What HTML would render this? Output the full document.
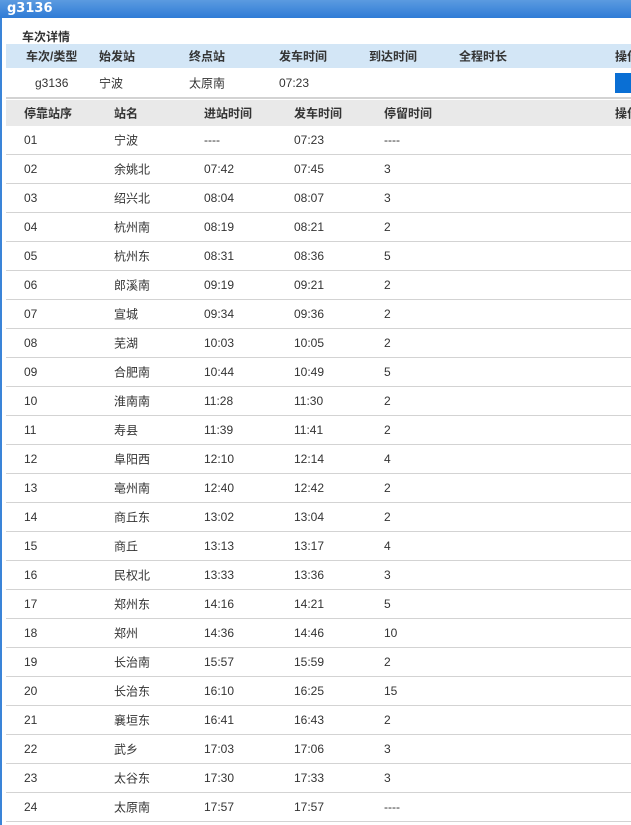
<!DOCTYPE html><html><head><meta charset="utf-8"><style>
body{margin:0;width:631px;height:825px;overflow:hidden;background:#fff;font-family:"Liberation Sans","Noto Sans CJK SC",sans-serif;font-size:12px;color:#333;position:relative}
.t{position:absolute;left:0;top:0;width:631px;height:18px;background:linear-gradient(#5b9be0,#2f7bd6);color:#fff;font-weight:bold;font-size:13px;line-height:17px;padding-left:7px;box-sizing:border-box;font-family:"DejaVu Sans",sans-serif}
.lb{position:absolute;left:0;top:18px;width:2px;height:807px;background:#3a84d8}
.a{position:absolute;white-space:nowrap}
.row{position:absolute;left:6px;width:625px;overflow:hidden}
.h1{background:#d3e6f6;font-weight:bold;height:24px;top:44px}
.h2{background:#e9e9e9;font-weight:bold;height:26px;top:100px}
.row span{position:absolute;top:50%;transform:translateY(-50%);white-space:nowrap}
.ln{border-bottom:1px solid #d3d3d3}
</style></head><body>
<div class="t">g3136</div><div class="lb"></div>
<div class="a" style="left:22px;top:28px;font-weight:bold">车次详情</div>
<div class="row h1"><span style="left:20px">车次/类型</span><span style="left:93px">始发站</span><span style="left:183px">终点站</span><span style="left:273px">发车时间</span><span style="left:363px">到达时间</span><span style="left:453px">全程时长</span><span style="left:609px">操作</span></div>
<div class="row ln" style="top:68px;height:29px;border-bottom-width:2px"><span style="left:29px">g3136</span><span style="left:93px">宁波</span><span style="left:183px">太原南</span><span style="left:273px">07:23</span><span style="left:609px;width:20px;height:20px;background:#0a6fd4"></span></div>
<div class="row h2"><span style="left:18px">停靠站序</span><span style="left:108px">站名</span><span style="left:198px">进站时间</span><span style="left:288px">发车时间</span><span style="left:378px">停留时间</span><span style="left:609px">操作</span></div>
<div id="r"></div>
<script>
var d=[["宁波","----","07:23","----"],["余姚北","07:42","07:45","3"],["绍兴北","08:04","08:07","3"],["杭州南","08:19","08:21","2"],["杭州东","08:31","08:36","5"],["郎溪南","09:19","09:21","2"],["宣城","09:34","09:36","2"],["芜湖","10:03","10:05","2"],["合肥南","10:44","10:49","5"],["淮南南","11:28","11:30","2"],["寿县","11:39","11:41","2"],["阜阳西","12:10","12:14","4"],["亳州南","12:40","12:42","2"],["商丘东","13:02","13:04","2"],["商丘","13:13","13:17","4"],["民权北","13:33","13:36","3"],["郑州东","14:16","14:21","5"],["郑州","14:36","14:46","10"],["长治南","15:57","15:59","2"],["长治东","16:10","16:25","15"],["襄垣东","16:41","16:43","2"],["武乡","17:03","17:06","3"],["太谷东","17:30","17:33","3"],["太原南","17:57","17:57","----"]];
var h="";d.forEach(function(x,i){var n=(i<9?"0":"")+(i+1);h+='<div class="row ln" style="top:'+(126+i*29)+'px;height:28px"><span style="left:18px">'+n+'</span><span style="left:108px">'+x[0]+'</span><span style="left:198px">'+x[1]+'</span><span style="left:288px">'+x[2]+'</span><span style="left:378px">'+x[3]+'</span></div>';});
document.getElementById("r").innerHTML=h;
</script>
</body></html>
